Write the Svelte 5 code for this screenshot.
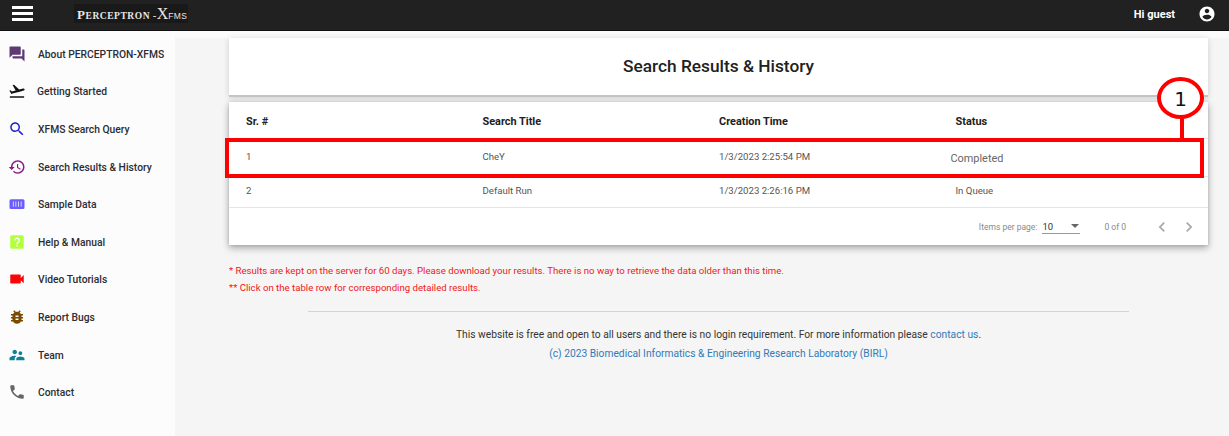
<script>
  const nav = [
    { label: 'About PERCEPTRON-XFMS', color: '#5e3a73', d: 'M21 6h-2v9H6v2c0 .55.45 1 1 1h11l4 4V7c0-.55-.45-1-1-1zm-4 6V3c0-.55-.45-1-1-1H3c-.55 0-1 .45-1 1v14l4-4h10c.55 0 1-.45 1-1z' },
    { label: 'Getting Started', color: '#111', shift: true, d: 'M2.5 19h19v2h-19zm19.57-9.36c-.21-.8-1.04-1.28-1.84-1.06L14.92 10l-6.9-6.43-1.93.51 4.14 7.17-4.97 1.33-1.97-1.54-1.45.39 1.82 3.16.77 1.33 1.6-.43 5.31-1.42 4.35-1.16L21 11.49c.81-.23 1.28-1.05 1.07-1.85z' },
    { label: 'XFMS Search Query', color: '#2222cc', d: 'M15.5 14h-.79l-.28-.27C15.41 12.59 16 11.11 16 9.5 16 5.91 13.09 3 9.5 3S3 5.91 3 9.5 5.91 16 9.5 16c1.61 0 3.09-.59 4.23-1.57l.27.28v.79l5 4.99L20.49 19l-4.99-5zm-6 0C7.01 14 5 11.99 5 9.5S7.01 5 9.5 5 14 7.01 14 9.5 11.99 14 9.5 14z' },
    { label: 'Search Results & History', color: '#8b1a8b', d: 'M13 3c-4.97 0-9 4.03-9 9H1l3.89 3.89.07.14L9 12H6c0-3.87 3.13-7 7-7s7 3.13 7 7-3.13 7-7 7c-1.93 0-3.68-.79-4.94-2.06l-1.42 1.42C8.27 19.99 10.51 21 13 21c4.97 0 9-4.03 9-9s-4.03-9-9-9zm-1 5v5l4.28 2.54.72-1.21-3.5-2.08V8H12z' },
    { label: 'Sample Data', color: '#6a5cff', d: 'M4 5.500h16a2 2 0 0 1 2 2v9a2 2 0 0 1-2 2H4a2 2 0 0 1-2-2v-9a2 2 0 0 1 2-2zM6.500 8.500v7h1v-7zm3.500 0v7h1v-7zm3.500 0v7h1v-7zm3.500 0v7h1v-7z' },
    { label: 'Help & Manual', color: '#b2ff3c', d: 'M5 3h14a2 2 0 0 1 2 2v14a2 2 0 0 1-2 2H5a2 2 0 0 1-2-2V5a2 2 0 0 1 2-2zm6 15h2v-2h-2zm1-12c-2.210 0-4 1.790-4 4h2c0-1.100.9-2 2-2s2 .9 2 2c0 2-3 1.750-3 5h2c0-2.250 3-2.500 3-5 0-2.210-1.790-4-4-4z' },
    { label: 'Video Tutorials', color: '#fa0505', d: 'M17 10.5V7c0-.55-.45-1-1-1H4c-.55 0-1 .45-1 1v10c0 .55.45 1 1 1h12c.55 0 1-.45 1-1v-3.5l4 4v-11l-4 4z' },
    { label: 'Report Bugs', color: '#7a4a00', d: 'M20 8h-2.81c-.45-.78-1.07-1.45-1.82-1.96L17 4.41 15.59 3l-2.17 2.17C12.96 5.06 12.49 5 12 5c-.49 0-.96.06-1.41.17L8.41 3 7 4.41l1.62 1.63C7.88 6.55 7.26 7.22 6.81 8H4v2h2.09c-.05.33-.09.66-.09 1v1H4v2h2v1c0 .34.04.67.09 1H4v2h2.81c1.04 1.79 2.97 3 5.19 3s4.15-1.21 5.19-3H20v-2h-2.09c.05-.33.09-.66.09-1v-1h2v-2h-2v-1c0-.34-.04-.67-.09-1H20V8zm-6 8h-4v-2h4v2zm0-4h-4v-2h4v2z' },
    { label: 'Team', color: '#0f7f94', d: 'M16.500 12c1.380 0 2.490-1.120 2.490-2.500S17.880 7 16.500 7C15.120 7 14 8.120 14 9.500s1.120 2.500 2.500 2.500zM9 11c1.660 0 2.990-1.340 2.990-3S10.660 5 9 5C7.340 5 6 6.340 6 8s1.340 3 3 3zm7.500 3c-1.830 0-5.500.92-5.500 2.750V19h11v-2.250c0-1.830-3.670-2.750-5.500-2.750zM9 13c-2.330 0-7 1.170-7 3.500V19h7v-2.250c0-.85.33-2.340 2.370-3.470C10.500 13.100 9.660 13 9 13z' },
    { label: 'Contact', color: '#666', d: 'M6.620 10.790c1.440 2.830 3.760 5.140 6.590 6.590l2.200-2.200c.27-.27.67-.36 1.020-.24 1.120.37 2.330.57 3.570.57.55 0 1 .45 1 1V20c0 .55-.45 1-1 1-9.390 0-17-7.610-17-17 0-.55.45-1 1-1h3.500c.55 0 1 .45 1 1 0 1.250.2 2.450.57 3.570.11.35.03.74-.25 1.020l-2.200 2.200z' }
  ];
  const rows = [
    { sr: '1', title: 'CheY', time: '1/3/2023 2:25:54 PM', status: 'Completed', mark: true },
    { sr: '2', title: 'Default Run', time: '1/3/2023 2:26:16 PM', status: 'In Queue', mark: false }
  ];
</script>

<div class="page">
  <header class="topbar">
    <div class="menu"><span></span><span></span><span></span></div>
    <div class="logo"><span class="big">P</span>ERCEPTRON <span class="dash">-</span><span class="x">X</span><span class="fms">FMS</span></div>
    <div class="spacer"></div>
    <span class="hi">Hi guest</span>
    <svg class="account" viewBox="0 0 24 24" aria-hidden="true"><path fill="#fff" d="M12 2C6.480 2 2 6.480 2 12s4.480 10 10 10 10-4.480 10-10S17.520 2 12 2zm0 3c1.660 0 3 1.340 3 3s-1.340 3-3 3-3-1.340-3-3 1.340-3 3-3zm0 14.200c-2.500 0-4.710-1.280-6-3.220.03-1.990 4-3.080 6-3.080 1.990 0 5.970 1.090 6 3.080-1.290 1.940-3.500 3.220-6 3.220z"/></svg>
  </header>

  <div class="body">
    <nav class="side">
      {#each nav as item}
        <div class="item" class:shift={item.shift}>
          <svg viewBox="0 0 24 24" aria-hidden="true"><path fill={item.color} fill-rule="evenodd" d={item.d}/></svg>
          <span>{item.label}</span>
        </div>
      {/each}
    </nav>

    <main class="main">
      <section class="title-card"><h1>Search Results &amp; History</h1></section>

      <section class="table-card">
        <div class="row head">
          <div>Sr. #</div><div>Search Title</div><div>Creation Time</div><div>Status</div>
        </div>
        {#each rows as r}
          <div class="row" class:first={r.mark} class:second={!r.mark}>
            <div>{r.sr}</div><div>{r.title}</div><div>{r.time}</div>
            <div class:done={r.mark}>{r.status}</div>
          </div>
        {/each}
        <div class="pager">
          <span class="ipp">Items per page:</span>
          <div class="select"><span>10</span><i></i></div>
          <span class="range">0 of 0</span>
          <svg class="chev" viewBox="0 0 24 24" aria-hidden="true"><path fill="#a8a8a8" d="M15.410 7.410 14 6l-6 6 6 6 1.410-1.410L10.830 12z"/></svg>
          <svg class="chev" viewBox="0 0 24 24" aria-hidden="true"><path fill="#a8a8a8" d="M10 6 8.590 7.410 13.170 12l-4.580 4.590L10 18l6-6z"/></svg>
        </div>

        <div class="mark-box"></div>
        <div class="mark-line"></div>
        <div class="mark-circle">1</div>
      </section>

      <div class="notes">
        <p>* Results are kept on the server for 60 days. Please download your results. There is no way to retrieve the data older than this time.</p>
        <p>** Click on the table row for corresponding detailed results.</p>
      </div>

      <footer class="foot">
        <p>This website is free and open to all users and there is no login requirement. For more information please <a href="#contact">contact us</a>.</p>
        <p><a href="#birl">(c) 2023 Biomedical Informatics &amp; Engineering Research Laboratory (BIRL)</a></p>
      </footer>
    </main>
  </div>
</div>

<style>
  :global(body) { margin: 0; background: #f5f5f5; }
  .page { width: 1229px; height: 436px; overflow: hidden; font-family: Roboto, "Liberation Sans", sans-serif; display: flex; flex-direction: column; }
  .topbar { height: 31px; flex: none; background: #212121; display: flex; align-items: center; box-sizing: border-box; border-bottom: 1px solid #111; color: #fff; }
  .menu { width: 21px; margin-left: 12px; display: flex; flex-direction: column; gap: 3.500px; margin-top: -3px; }
  .menu span { display: block; height: 2.500px; background: #fff; }
  .logo { margin-left: 41px; margin-top: -3px; width: 114px; height: 19px; line-height: 19px; background: #191919; font-family: "Liberation Serif", serif; font-size: 9.500px; font-weight: 700; letter-spacing: 0.55px; color: #e8e8e8; white-space: nowrap; box-sizing: border-box; padding-left: 3px; }
  .big { font-size: 13px; }
  .x { font-size: 16px; letter-spacing: 0; font-weight: 400; }
  .fms { font-family: "Liberation Sans", sans-serif; font-size: 8.500px; letter-spacing: 0.3px; font-weight: 400; }
  .spacer { flex: 1; }
  .hi { font-size: 11px; font-weight: 700; margin-right: 23px; margin-top: -2px; }
  .account { width: 18px; height: 18px; margin-right: 13px; margin-top: -2px; }

  .body { flex: 1; display: flex; min-height: 0; }
  .side { width: 175px; flex: none; background: #fcfcfc; padding-top: 4px; box-sizing: border-box; }
  .item { height: 37.6px; display: flex; align-items: center; padding-left: 8px; font-size: 10.300px; font-weight: 500; color: #2c2c34; white-space: nowrap; }
  .item span { position: relative; top: 0.5px; }
  .item svg { width: 18px; height: 18px; flex: none; margin-right: 12px; }
  .item.shift svg { margin-right: 11px; }

  .main { flex: 1; padding: 7px 21px 0 54px; min-width: 0; background: linear-gradient(#fbfbfb 0 7px, #f5f5f5 7px); }
  .title-card { height: 59px; padding-bottom: 2px; background: #fff; border-bottom: 2px solid #c4c4c4; box-sizing: border-box; box-shadow: 0 1px 6px rgba(0,0,0,.16); display: flex; align-items: center; justify-content: center; }
  h1 { margin: 0; font-size: 17.300px; font-weight: 500; color: #212121; }

  .table-card { position: relative; margin-top: 5px; height: 143px; background: #fff; box-shadow: 0 3px 7px rgba(0,0,0,.32), 0 0 3px rgba(0,0,0,.12); box-sizing: border-box; }
  .row { display: grid; grid-template-columns: 236.500px 236.500px 236.500px 1fr; padding-left: 17px; height: 31px; align-items: center; font-size: 9.600px; color: #555; border-bottom: 1px solid #e6e6e6; box-sizing: border-box; }
  .row.head { height: 37px; font-size: 10.900px; font-weight: 700; color: #212121; padding-top: 3px; }
  .row.first { height: 38px; padding-bottom: 3px; }
  .row.second { height: 31px; padding-bottom: 4px; }
  .done { font-size: 10.900px; color: #666; position: relative; left: -5px; top: 2px; }

  .pager { height: 37px; display: flex; align-items: center; justify-content: flex-end; font-size: 8.500px; color: #8a8a8a; }
  .select { width: 38px; height: 15px; margin-left: 5px; box-sizing: border-box; border-bottom: 1px solid #9a9a9a; display: flex; align-items: center; justify-content: space-between; color: #333; font-size: 9.500px; padding-right: 1px; }
  .select i { width: 0; height: 0; border-left: 4px solid transparent; border-right: 4px solid transparent; border-top: 4px solid #666; }
  .range { margin-left: 24px; margin-right: 26px; }
  .chev { width: 20px; height: 20px; margin-right: 7px; }
  .chev:last-child { margin-right: 9px; }

  .mark-box { position: absolute; left: -4px; top: 36px; width: 979px; height: 40px; border: 4px solid #f00; box-sizing: border-box; }
  .mark-line { position: absolute; left: 951px; top: 14px; width: 4px; height: 24px; background: #f00; }
  .mark-circle { position: absolute; left: 928px; top: -25px; width: 47px; height: 42px; padding-top: 2px; box-sizing: border-box; border: 4px solid #f00; border-radius: 50%; background: #fff; font-family: "DejaVu Sans", sans-serif; font-size: 20px; color: #111; display: flex; align-items: center; justify-content: center; }

  .notes { margin-top: 20px; font-size: 9.650px; color: #f01818; }
  .notes p { margin: 0 0 5px; line-height: 12px; }

  .foot { margin: 17px 79px 0; border-top: 1px solid #d4d4d4; padding-top: 16px; text-align: center; font-size: 10.250px; color: #333; }
  .foot p { margin: 0 0 6px; line-height: 13px; }
  .foot a { color: #337ab7; text-decoration: none; }
</style>
